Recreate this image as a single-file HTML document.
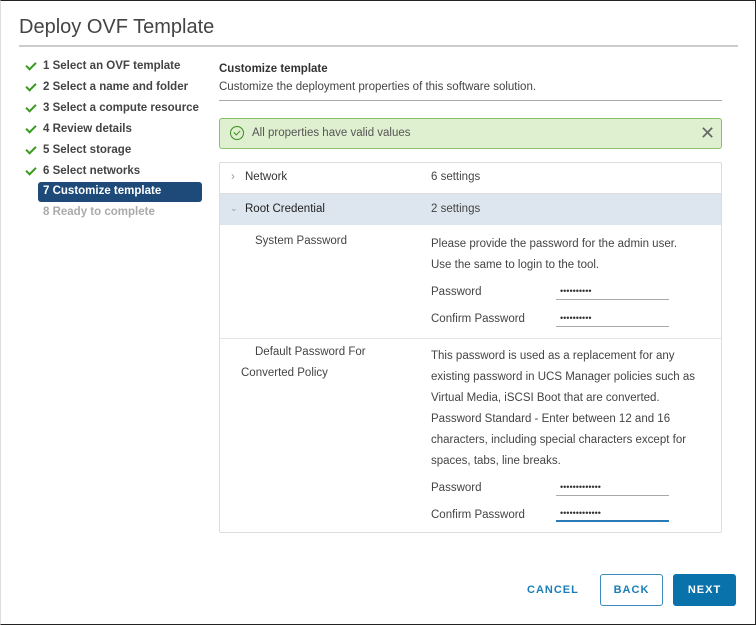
<!DOCTYPE html>
<html><head><style>
*{margin:0;padding:0;box-sizing:border-box}
body{width:756px;height:625px;background:#fff;font-family:"Liberation Sans",sans-serif;position:relative;overflow:hidden;color:#333}
.frame{position:absolute;left:0;top:0;width:756px;height:625px;border:1px solid #222;border-left-color:#ddd}
.a{position:absolute;white-space:nowrap}
.title{left:19px;top:16px;font-size:20px;color:#444}
.hr{position:absolute;height:2px;background:#ccc}
.step{position:absolute;left:43px;font-size:11.5px;font-weight:bold;color:#444}
.ck{position:absolute;left:26px;width:10px;height:6px;border-left:2px solid #3a9a1f;border-bottom:2px solid #3a9a1f;transform:rotate(-45deg)}
.t{font-size:11.5px;color:#444}
.pw{position:absolute;left:556px;width:113px;border-bottom:1px solid #aaa;height:14px;font-size:9px;padding-left:4px;line-height:10px}
</style></head><body>
<div class="frame"></div>
<div class="a title">Deploy OVF Template</div>
<div class="hr" style="left:19px;top:45px;width:719px"></div>

<div class="ck" style="top:62px"></div><div class="step" style="top:60px">1 Select an OVF template</div>
<div class="ck" style="top:83px"></div><div class="step" style="top:81px">2 Select a name and folder</div>
<div class="ck" style="top:104px"></div><div class="step" style="top:102px">3 Select a compute resource</div>
<div class="ck" style="top:125px"></div><div class="step" style="top:123px">4 Review details</div>
<div class="ck" style="top:146px"></div><div class="step" style="top:144px">5 Select storage</div>
<div class="ck" style="top:167px"></div><div class="step" style="top:165px">6 Select networks</div>
<div style="position:absolute;left:38px;top:182px;width:164px;height:20px;background:#1e4a7a;border-radius:3px"></div>
<div class="step" style="top:185px;color:#fff">7 Customize template</div>
<div class="step" style="top:206px;color:#aaa">8 Ready to complete</div>

<div class="a t" style="left:219px;top:63px;font-weight:bold;color:#333">Customize template</div>
<div class="a t" style="left:219px;top:81px">Customize the deployment properties of this software solution.</div>
<div class="hr" style="left:219px;top:100px;width:503px;height:1px;background:#aaa"></div>

<div style="position:absolute;left:219px;top:118px;width:503px;height:31px;background:#dff0d0;border:1px solid #8bc06a;border-radius:3px"></div>
<div style="position:absolute;left:230px;top:126px;width:14px;height:14px;border:1.5px solid #3a8a1f;border-radius:50%"></div>
<div style="position:absolute;left:235px;top:129px;width:4px;height:6px;border-right:1.5px solid #3a8a1f;border-bottom:1.5px solid #3a8a1f;transform:rotate(45deg)"></div>
<div class="a t" style="left:252px;top:127px;color:#555">All properties have valid values</div>
<div class="a" style="left:700px;top:123px;font-size:18px;color:#666">✕</div>

<div style="position:absolute;left:219px;top:162px;width:503px;height:371px;border:1px solid #ddd;border-radius:2px"></div>
<div style="position:absolute;left:220px;top:194px;width:501px;height:31px;background:#dde6ee"></div>
<div style="position:absolute;left:220px;top:193px;width:501px;height:1px;background:#ddd"></div>
<div class="a t" style="left:231px;top:171px;color:#999">›</div>
<div class="a t" style="left:245px;top:171px;color:#333">Network</div>
<div class="a t" style="left:431px;top:171px">6 settings</div>
<div class="a t" style="left:230px;top:203px;color:#999;font-size:9px">⌄</div>
<div class="a t" style="left:245px;top:203px;color:#222">Root Credential</div>
<div class="a t" style="left:431px;top:203px">2 settings</div>

<div class="a t" style="left:255px;top:235px">System Password</div>
<div class="a t" style="left:431px;top:234px;line-height:21px">Please provide the password for the admin user.<br>Use the same to login to the tool.</div>
<div class="a t" style="left:431px;top:286px">Password</div>
<div class="pw" style="top:286px">••••••••••</div>
<div class="a t" style="left:431px;top:313px">Confirm Password</div>
<div class="pw" style="top:313px">••••••••••</div>
<div style="position:absolute;left:220px;top:338px;width:501px;height:1px;background:#e4e4e4"></div>

<div class="a t" style="left:255px;top:346px">Default Password For</div>
<div class="a t" style="left:241px;top:367px">Converted Policy</div>
<div class="a t" style="left:431px;top:346px;line-height:21px">This password is used as a replacement for any<br>existing password in UCS Manager policies such as<br>Virtual Media, iSCSI Boot that are converted.<br>Password Standard - Enter between 12 and 16<br>characters, including special characters except for<br>spaces, tabs, line breaks.</div>
<div class="a t" style="left:431px;top:482px">Password</div>
<div class="pw" style="top:482px">•••••••••••••</div>
<div class="a t" style="left:431px;top:509px">Confirm Password</div>
<div class="pw" style="top:508px;border-bottom:2px solid #2a7ab8">•••••••••••••</div>

<div class="a" style="left:527px;top:584px;font-size:11px;font-weight:bold;letter-spacing:1px;color:#1a7fb8">CANCEL</div>
<div style="position:absolute;left:600px;top:574px;width:63px;height:32px;border:1px solid #3a8cc0;border-radius:3px;font-size:11px;font-weight:bold;letter-spacing:1px;color:#1a7fb8;text-align:center;line-height:30px">BACK</div>
<div style="position:absolute;left:673px;top:574px;width:63px;height:32px;background:#0a72ab;border-radius:3px;font-size:11px;font-weight:bold;letter-spacing:1px;color:#fff;text-align:center;line-height:32px">NEXT</div>
</body></html>
